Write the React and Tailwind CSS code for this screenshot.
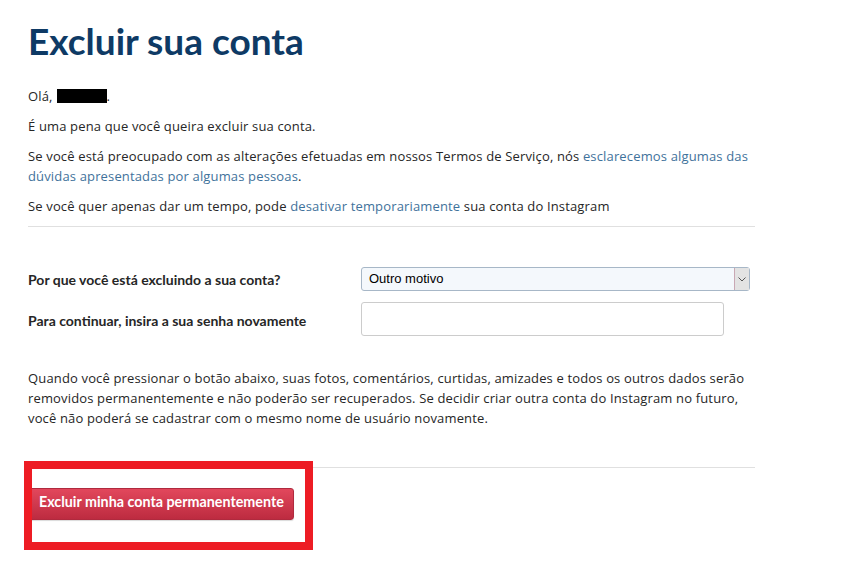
export default function App() {
  return (
    <main className="min-h-screen bg-white text-[#262626] font-['Open_Sans',sans-serif]">
      <div className="ml-[28px] w-[727px] pt-[20px]">
        <h1 className="font-['Lato',sans-serif] text-[37px] font-bold leading-[42px] text-[#0e3a65]">
          Excluir sua conta
        </h1>

        <div className="mt-[24px] text-[13px] leading-[20px] tracking-[0.15px]">
          <p className="flex items-center">
            Olá,<span className="ml-[4px] inline-block h-[14px] w-[50px] bg-black"></span>.
          </p>
          <p className="mt-[10px]">É uma pena que você queira excluir sua conta.</p>
          <p className="mt-[10px]">
            Se você está preocupado com as alterações efetuadas em nossos Termos de Serviço, nós{" "}
            <a href="#" className="text-[#3f729b]">
              esclarecemos algumas das dúvidas apresentadas por algumas pessoas
            </a>
            .
          </p>
          <p className="mt-[10px]">
            Se você quer apenas dar um tempo, pode{" "}
            <a href="#" className="text-[#3f729b]">
              desativar temporariamente
            </a>{" "}
            sua conta do Instagram
          </p>
        </div>

        <div className="mt-[10px] border-t border-[#e0e0e0]"></div>

        <form className="mt-[40px] text-[13px]">
          <div className="flex items-center">
            <label className="w-[333px] font-['Lato',sans-serif] text-[14px] font-bold">
              Por que você está excluindo a sua conta?
            </label>
            <div className="relative flex h-[24px] w-[389px] items-center rounded-[3px] border border-[#a7b7c7] bg-[#f4f8fc] font-['Liberation_Sans',sans-serif] text-[13px] text-black">
              <span className="pl-[7px]">Outro motivo</span>
              <span className="absolute right-0 top-0 flex h-[22px] w-[15px] items-center justify-center border-l border-[#c9a8b4] bg-[#e3e3e3]">
                <svg width="8" height="5" viewBox="0 0 8 5" fill="none">
                  <path d="M0.5 0.5 L4 4 L7.5 0.5" stroke="#555" strokeWidth="1" />
                </svg>
              </span>
            </div>
          </div>
          <div className="mt-[11px] flex items-center">
            <label className="w-[333px] pt-[2px] font-['Lato',sans-serif] text-[14px] font-bold">
              Para continuar, insira a sua senha novamente
            </label>
            <input
              type="password"
              className="h-[34px] w-[363px] rounded-[3px] border border-[#cccccc] bg-white px-2 outline-none"
            />
          </div>
        </form>

        <p className="mt-[32px] text-[13px] leading-[20px] tracking-[0.15px]">
          Quando você pressionar o botão abaixo, suas fotos, comentários, curtidas, amizades e todos os outros dados serão
          removidos permanentemente e não poderão ser recuperados. Se decidir criar outra conta do Instagram no futuro,
          você não poderá se cadastrar com o mesmo nome de usuário novamente.
        </p>

        <div className="relative mt-[39px] border-t border-[#e0e0e0]">
          <div className="absolute left-[-4px] top-[-7px] h-[89px] w-[289px] overflow-hidden border-[8px] border-[#ed1c24] bg-white">
            <button
              type="button"
              className="ml-[-4px] mt-[19px] h-[32px] w-[266px] whitespace-nowrap rounded-[3px] border border-[#b02a3e] bg-gradient-to-b from-[#e2475c] to-[#bd2b40] pb-[4px] pl-[10px] text-left font-['Lato',sans-serif] text-[14.3px] font-bold leading-none text-white shadow-[0_1px_1px_rgba(0,0,0,0.15)]"
            >
              Excluir minha conta permanentemente
            </button>
          </div>
        </div>
      </div>
    </main>
  );
}
